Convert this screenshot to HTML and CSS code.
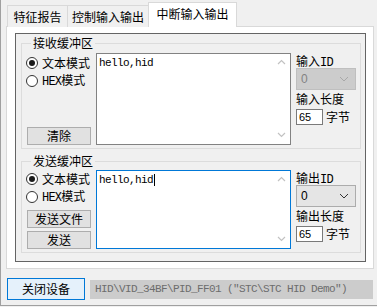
FILE: index.html
```html
<!DOCTYPE html>
<html>
<head>
<meta charset="utf-8">
<link rel="stylesheet" href="styles.css">
</head>
<body>
<div class="app">
  <div class="tabs">
    <div class="tab t1">特征报告</div>
    <div class="tab t2">控制输入输出</div>
    <div class="tab t3 active">中断输入输出</div>
  </div>
  <div class="pane">
    <div class="frame">
      <fieldset class="group g1">
        <legend>接收缓冲区</legend>
        <div class="row">
          <div class="leftcol">
            <div class="radio"><span class="dot on"></span><span>文本模式</span></div>
            <div class="radio"><span class="dot"></span><span><span class="mono">HEX</span>模式</span></div>
            <div class="spacer"></div>
            <div class="btn">清除</div>
          </div>
          <div class="textbox tb1">
            <div class="text">hello,hid</div>
            <div class="sbar">
              <svg width="9" height="6" viewBox="0 0 9 6"><path d="M1 5 L4.5 1.5 L8 5" fill="none" stroke="#c2c2c2" stroke-width="1.2"/></svg>
              <svg width="9" height="6" viewBox="0 0 9 6"><path d="M1 1 L4.5 4.5 L8 1" fill="none" stroke="#c2c2c2" stroke-width="1.2"/></svg>
            </div>
          </div>
          <div class="rightcol">
            <div class="lbl">输入<span class="mono">ID</span></div>
            <div class="select disabled"><span>0</span>
              <svg width="10" height="6" viewBox="0 0 10 6"><path d="M1 1 L5 5 L9 1" fill="none" stroke="#a8a8a8" stroke-width="1"/></svg>
            </div>
            <div class="lbl">输入长度</div>
            <div class="lenrow"><div class="input">65</div><span>字节</span></div>
          </div>
        </div>
      </fieldset>
      <fieldset class="group g2">
        <legend>发送缓冲区</legend>
        <div class="row">
          <div class="leftcol">
            <div class="radio"><span class="dot on"></span><span>文本模式</span></div>
            <div class="radio"><span class="dot"></span><span><span class="mono">HEX</span>模式</span></div>
            <div class="spacer"></div>
            <div class="btn">发送文件</div>
            <div class="btn b2">发送</div>
          </div>
          <div class="textbox tb2 focus">
            <div class="text">hello,hid<span class="caret"></span></div>
            <div class="sbar">
              <svg width="9" height="6" viewBox="0 0 9 6"><path d="M1 5 L4.5 1.5 L8 5" fill="none" stroke="#c2c2c2" stroke-width="1.2"/></svg>
              <svg width="9" height="6" viewBox="0 0 9 6"><path d="M1 1 L4.5 4.5 L8 1" fill="none" stroke="#c2c2c2" stroke-width="1.2"/></svg>
            </div>
          </div>
          <div class="rightcol">
            <div class="lbl">输出<span class="mono">ID</span></div>
            <div class="select"><span>0</span>
              <svg width="10" height="6" viewBox="0 0 10 6"><path d="M1 1 L5 5 L9 1" fill="none" stroke="#333" stroke-width="1"/></svg>
            </div>
            <div class="lbl">输出长度</div>
            <div class="lenrow"><div class="input">65</div><span>字节</span></div>
          </div>
        </div>
      </fieldset>
    </div>
  </div>
  <div class="bottom">
    <div class="closebtn">关闭设备</div>
    <div class="status">HID\VID_34BF\PID_FF01 ("STC\STC HID Demo")</div>
  </div>
</div>
</body>
</html>
```
FILE: styles.css
```css
* { box-sizing: border-box; }
html, body { margin: 0; padding: 0; }
body {
  width: 377px;
  height: 307px;
  background: #f0f0f0;
  font-family: "Noto Sans CJK SC", sans-serif;
  font-size: 12px;
  line-height: 14px;
  color: #000;
  overflow: hidden;
}
.app {
  width: 377px;
  height: 306px;
  border-left: 1px solid #a0a0a0;
  border-bottom: 1px solid #a0a0a0;
  padding: 2px 0 0 5px;
}
.mono { font-family: "Liberation Mono", monospace; font-size: 12px; letter-spacing: -0.8px; }
.tabs {
  display: flex;
  align-items: flex-end;
  height: 25px;
  margin-bottom: -1px;
  padding-left: 1px;
  position: relative;
  z-index: 1;
}
.tab {
  height: 22px;
  border: 1px solid #d9d9d9;
  border-bottom: none;
  background: #f0f0f0;
  display: flex;
  align-items: center;
  justify-content: center;
  padding-top: 1px;
}
.t1 { width: 61px; }
.t2 { width: 82px; margin-left: -1px; }
.t3 { width: 89px; margin-left: -1px; }
.tab.active {
  height: 25px;
  background: #fff;
  padding-top: 0;
  padding-bottom: 2px;
}
.pane {
  width: 368px;
  height: 243px;
  background: #fff;
  border: 1px solid #d9d9d9;
  padding: 6px 7px 0 8px;
}
.frame {
  width: 351px;
  height: 229px;
  border: 1px solid #646464;
  background: #f0f0f0;
  padding: 2px 4px 0 5px;
}
.group {
  margin: 0;
  border: 1px solid #dcdcdc;
  padding: 3px 0 3px 4px;
  min-width: 0;
}
.group legend {
  padding: 0 2px;
  margin-left: 5px;
  line-height: 14px;
}
.g2 { margin-top: 5px; padding-top: 2px; }
.row { display: flex; }
.leftcol {
  width: 69px;
  display: flex;
  flex-direction: column;
}
.radio {
  display: flex;
  align-items: center;
  height: 18px;
  gap: 4px;
}
.g1 .radio:first-child { margin-top: 1px; }
.dot {
  width: 12px;
  height: 12px;
  border: 1px solid #333;
  border-radius: 50%;
  background: #fff;
  display: flex;
  align-items: center;
  justify-content: center;
}
.dot.on::after {
  content: "";
  width: 6px;
  height: 6px;
  border-radius: 50%;
  background: #1a1a1a;
}
.spacer { flex: 1; }
.btn {
  width: 64px;
  height: 18px;
  margin-left: 1px;
  background: #e1e1e1;
  border: 1px solid #adadad;
  display: flex;
  align-items: center;
  justify-content: center;
}
.b2 { margin-top: 3px; }
.textbox {
  width: 195px;
  margin-left: 1px;
  background: #fff;
  border: 1px solid #828282;
  display: flex;
}
.tb1 { height: 92px; }
.tb2 { height: 79px; }
.textbox.focus { border-color: #0078d7; }
.text {
  flex: 1;
  font-family: "Liberation Mono", monospace;
  font-size: 11px;
  letter-spacing: -0.6px;
  line-height: 12px;
  padding: 3px 0 0 2px;
  display: flex;
  align-items: flex-start;
}
.caret {
  display: inline-block;
  width: 1px;
  height: 12px;
  margin-left: 1px;
  background: #000;
}
.sbar {
  width: 17px;
  display: flex;
  flex-direction: column;
  justify-content: space-between;
  align-items: center;
  padding: 5px 0 6px;
}
.rightcol {
  margin-left: 5px;
  width: 60px;
  display: flex;
  flex-direction: column;
  padding-top: 1px;
}
.lbl { height: 14px; line-height: 14px; }
.select {
  height: 22px;
  width: 60px;
  margin-bottom: 2px;
  border: 1px solid #acacac;
  background: #e5e5e5;
  display: flex;
  align-items: center;
  justify-content: space-between;
  padding: 0 6px 0 4px;
  font-family: "Liberation Sans", sans-serif;
  font-size: 12px;
}
.select.disabled {
  background: #cccccc;
  border-color: #bfbfbf;
  color: #838383;
}
.lenrow {
  display: flex;
  align-items: center;
  gap: 3px;
  margin-top: 3px;
}
.input {
  width: 27px;
  height: 16px;
  background: #fff;
  border: 1px solid #7a7a7a;
  font-family: "Liberation Sans", sans-serif;
  font-size: 11px;
  line-height: 14px;
  padding-left: 2px;
}
.bottom {
  display: flex;
  align-items: flex-start;
  margin-top: 9px;
  padding-left: 1px;
}
.closebtn {
  width: 78px;
  height: 22px;
  background: #e5f1fb;
  border: 1px solid #0078d7;
  display: flex;
  align-items: center;
  justify-content: center;
}
.status {
  margin-left: 5px;
  margin-top: 2px;
  width: 283px;
  height: 19px;
  background: #cccccc;
  color: #6d6d6d;
  font-family: "Liberation Mono", monospace;
  font-size: 11px;
  letter-spacing: -0.6px;
  line-height: 19px;
  padding-left: 5px;
  white-space: nowrap;
}
```
